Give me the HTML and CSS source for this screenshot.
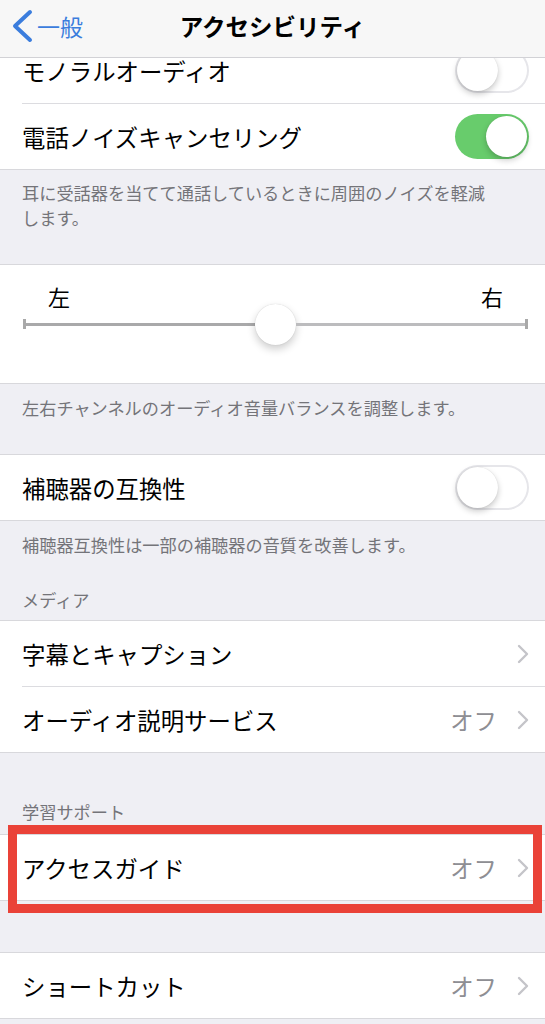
FILE: index.html
```html
<!DOCTYPE html>
<html lang="ja">
<head>
<meta charset="utf-8">
<title>アクセシビリティ</title>
<link rel="stylesheet" href="styles.css">
</head>
<body>
<header class="nav">
  <a class="back">
    <svg class="back-icon" width="22" height="34" viewBox="0 0 22 34"><polyline points="19,3 4,17 19,31" fill="none" stroke="#3b7ddd" stroke-width="4" stroke-linecap="round" stroke-linejoin="round"/></svg>
    <span class="back-label">一般</span>
  </a>
  <h1 class="title">アクセシビリティ</h1>
</header>

<main class="content">
  <section class="group">
    <div class="row sep"><span class="label">モノラルオーディオ</span><span class="toggle"></span></div>
    <div class="row"><span class="label">電話ノイズキャンセリング</span><span class="toggle on"></span></div>
  </section>
  <p class="footer f1">耳に受話器を当てて通話しているときに周囲のノイズを軽減<br>します。</p>

  <section class="group slider-cell">
    <div class="slider-labels"><span>左</span><span>右</span></div>
    <div class="slider">
      <span class="tick"></span>
      <span class="track left"></span>
      <span class="thumb"></span>
      <span class="track right"></span>
      <span class="tick"></span>
    </div>
  </section>
  <p class="footer f2">左右チャンネルのオーディオ音量バランスを調整します。</p>

  <section class="group">
    <div class="row"><span class="label">補聴器の互換性</span><span class="toggle"></span></div>
  </section>
  <p class="footer f3">補聴器互換性は一部の補聴器の音質を改善します。</p>

  <p class="header h-media">メディア</p>
  <section class="group">
    <div class="row sep"><span class="label">字幕とキャプション</span><svg class="chev" width="12" height="20" viewBox="0 0 12 20"><polyline points="2,2 10,10 2,18" fill="none" stroke="#c4c4c9" stroke-width="2.4" stroke-linecap="round" stroke-linejoin="round"/></svg></div>
    <div class="row"><span class="label">オーディオ説明サービス</span><span class="value">オフ</span><svg class="chev" width="12" height="20" viewBox="0 0 12 20"><polyline points="2,2 10,10 2,18" fill="none" stroke="#c4c4c9" stroke-width="2.4" stroke-linecap="round" stroke-linejoin="round"/></svg></div>
  </section>

  <p class="header h-learn">学習サポート</p>
  <section class="group guided">
    <div class="row"><span class="label">アクセスガイド</span><span class="value">オフ</span><svg class="chev" width="12" height="20" viewBox="0 0 12 20"><polyline points="2,2 10,10 2,18" fill="none" stroke="#c4c4c9" stroke-width="2.4" stroke-linecap="round" stroke-linejoin="round"/></svg></div>
    <div class="highlight"></div>
  </section>

  <section class="group shortcut">
    <div class="row"><span class="label">ショートカット</span><span class="value">オフ</span><svg class="chev" width="12" height="20" viewBox="0 0 12 20"><polyline points="2,2 10,10 2,18" fill="none" stroke="#c4c4c9" stroke-width="2.4" stroke-linecap="round" stroke-linejoin="round"/></svg></div>
  </section>
</main>
</body>
</html>
```
FILE: styles.css
```css
* { box-sizing: border-box; }
html, body {
  margin: 0;
  padding: 0;
  background: #efeff4;
  font-family: "Noto Sans CJK JP", "Noto Sans", sans-serif;
  width: 545px;
  height: 1024px;
  overflow: hidden;
}
.nav {
  position: fixed;
  top: 0;
  left: 0;
  width: 545px;
  height: 58px;
  background: #f7f7f7;
  border-bottom: 1px solid #d2d2d6;
  z-index: 10;
}
.back {
  position: absolute;
  left: 11px;
  top: 9px;
  display: flex;
  align-items: center;
  color: #3b7ddd;
}
.back-icon { display: block; }
.back-label {
  font-size: 23px;
  line-height: 34px;
  margin-left: 4px;
}
.title {
  margin: 0;
  text-align: center;
  font-size: 23.5px;
  font-weight: 700;
  line-height: 52px;
  color: #000;
}
.content {
  padding-top: 37px;
}
.group {
  background: #fff;
  border-top: 1px solid #d8d8dc;
  border-bottom: 1px solid #d8d8dc;
  position: relative;
}
.row {
  height: 65px;
  display: flex;
  align-items: center;
  padding: 0 16px 0 22px;
  position: relative;
}
.row.sep { height: 66px; border-bottom: 1px solid transparent; }
.row.sep::after {
  content: "";
  position: absolute;
  left: 22px;
  right: 0;
  bottom: -1px;
  height: 1px;
  background: #dcdce0;
}
.label {
  flex: 1;
  font-size: 23.4px;
  color: #000;
  white-space: nowrap;
}
.value {
  font-size: 23.4px;
  color: #8e8e93;
  margin-right: 20px;
}
.chev { display: block; }
.toggle {
  width: 74px;
  height: 45px;
  border-radius: 23px;
  background: #fff;
  box-shadow: inset 0 0 0 2px #e6e6ea;
  position: relative;
  flex: none;
}
.toggle::after {
  content: "";
  position: absolute;
  top: 2px;
  left: 2px;
  width: 41px;
  height: 41px;
  border-radius: 50%;
  background: #fff;
  box-shadow: 0 3px 6px rgba(0,0,0,0.22), 0 0 1px rgba(0,0,0,0.15);
}
.toggle.on {
  background: #68cc6c;
  box-shadow: none;
}
.toggle.on::after { left: 31px; }
.footer {
  margin: 0;
  font-size: 17.2px;
  line-height: 25px;
  color: #747479;
  padding: 0 22px;
}
.f1 { padding-top: 10px; padding-bottom: 34px; }
.f2 { padding-top: 11px; padding-bottom: 34px; }
.f3 { padding-top: 11px; }
.header {
  margin: 0;
  font-size: 17.2px;
  line-height: 25px;
  color: #747479;
  padding: 0 22px;
}
.h-media { padding-top: 30px; padding-bottom: 8px; }
.h-learn { padding-top: 46px; padding-bottom: 10px; }
.slider-cell { height: 120px; }
.slider-labels {
  display: flex;
  justify-content: space-between;
  padding: 20px 42px 0 48px;
  font-size: 22px;
  line-height: 23px;
  color: #000;
}
.slider {
  height: 32px;
  display: flex;
  align-items: center;
  padding: 0 17px 0 23px;
}
.tick {
  width: 3px;
  height: 10px;
  background: #a9a9a9;
  flex: none;
}
.track {
  flex: 1;
  height: 3px;
}
.track.left { background: #a9a9aa; }
.track.right { background: #bcbcbe; }
.thumb {
  width: 41px;
  height: 41px;
  border-radius: 50%;
  background: #fff;
  box-shadow: 0 4px 8px rgba(0,0,0,0.2), 0 0 1px rgba(0,0,0,0.2);
  flex: none;
}
.shortcut { margin-top: 51px; }
.highlight {
  position: absolute;
  left: 8px;
  top: -10px;
  width: 534px;
  height: 88px;
  border: 9px solid #ea4238;
}
```
